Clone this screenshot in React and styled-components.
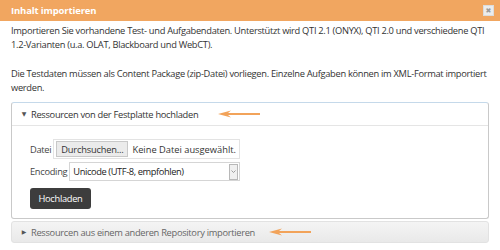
import React from "react";
import styled, { createGlobalStyle } from "styled-components";

const Global = createGlobalStyle`
  html, body { margin: 0; padding: 0; background: #fff; }
  body { font-family: "Open Sans", "DejaVu Sans", sans-serif; color: #333; }
`;

const Dialog = styled.div`
  width: 500px;
  height: 250px;
  background: #fff;
  overflow: hidden;
`;

const Header = styled.div`
  height: 21px;
  background: #f1a660;
  display: flex;
  align-items: center;
  justify-content: space-between;
  padding: 0 6px 0 11px;
  box-sizing: border-box;
`;

const Title = styled.div`
  color: #fff;
  font-weight: 700;
  font-size: 9.5px;
  letter-spacing: -0.15px;
`;

const Close = styled.div`
  width: 11px;
  height: 11px;
  background: #ececec;
  border: 1px solid #dcdcdc;
  box-sizing: border-box;
  display: flex;
  align-items: center;
  justify-content: center;
  color: #9a9a9a;
  font-size: 7px;
  line-height: 1;
  font-weight: 700;
`;

const Body = styled.div`
  padding: 3px 11px 0 11px;
  letter-spacing: -0.3px;
`;

const Para = styled.p`
  margin: 0 0 16px 0;
  font-size: 9.3px;
  line-height: 13.5px;
  &:last-of-type { margin-bottom: 8px; }
`;

const Panel = styled.div`
  border: 1px solid ${(p) => (p.$open ? "#c9c9c9" : "#e2e2e2")};
  border-top-color: ${(p) => (p.$open ? "#c5d9ea" : "#e2e2e2")};
  border-radius: 3px;
  margin-bottom: 2px;
  ${(p) => (p.$open ? "" : "background: linear-gradient(#f4f4f4, #e9e9e9);")}
`;

const PanelHead = styled.div`
  height: ${(p) => (p.$open ? "22px" : "20px")};
  display: flex;
  align-items: center;
  padding-left: 9px;
  font-size: 9.3px;
  color: ${(p) => (p.$open ? "#333" : "#666")};
  border-bottom: ${(p) => (p.$open ? "1px solid #e5e5e5" : "none")};
  gap: 4px;
`;

const Caret = styled.span`
  font-size: 6px;
  color: #555;
  width: 6px;
  display: inline-flex;
  justify-content: center;
`;

const Arrow = styled.svg`
  margin-left: ${(p) => p.$gap}px;
  width: 42px;
  height: 8px;
`;

const PanelBody = styled.div`
  padding: 13px 18px 9px 18px;
  display: flex;
  flex-direction: column;
  gap: 3px;
`;

const Row = styled.div`
  display: flex;
  align-items: center;
  gap: 2px;
  font-size: 9.3px;
`;

const Label = styled.span`
  color: #444;
`;

const FileBox = styled.div`
  width: 187px;
  height: 20px;
  border: 1px solid #e3e3e3;
  box-sizing: border-box;
  display: flex;
  align-items: center;
  padding-left: 2px;
  gap: 4px;
  font-size: 9.3px;
  letter-spacing: 0;
`;

const BrowseBtn = styled.span`
  background: #ebebeb;
  border: 1px solid #c8c8c8;
  height: 14px;
  padding: 0 4px;
  display: flex;
  align-items: center;
  color: #333;
  letter-spacing: -0.2px;
`;

const Select = styled.div`
  width: 171px;
  height: 19px;
  border: 1px solid #d5d5d5;
  box-sizing: border-box;
  display: flex;
  align-items: center;
  justify-content: space-between;
  padding-left: 3px;
  font-size: 9.3px;
  color: #222;
  letter-spacing: -0.4px;
`;

const SelectBtn = styled.span`
  width: 9px;
  height: 16px;
  margin-right: 1px;
  border: 1px solid #b8b8b8;
  background: #f0f0f0;
  box-sizing: border-box;
  display: flex;
  align-items: center;
  justify-content: center;
`;

const Button = styled.div`
  margin-top: 4px;
  width: 61px;
  height: 21px;
  background: #3d3d3d;
  border-radius: 3px;
  color: #fff;
  font-size: 9.3px;
  display: flex;
  align-items: center;
  justify-content: center;
`;

const OrangeArrow = ({ gap }) => (
  <Arrow $gap={gap} viewBox="0 0 42 8">
    <path d="M0 4 L13 0.5 L10 3.1 L42 3.1 L42 4.9 L10 4.9 L13 7.5 Z" fill="#f2a35a" />
  </Arrow>
);

export default function App() {
  return (
    <>
      <Global />
      <Dialog>
        <Header>
          <Title>Inhalt importieren</Title>
          <Close>✖</Close>
        </Header>
        <Body>
          <Para>
            Importieren Sie vorhandene Test- und Aufgabendaten. Unterstützt wird QTI 2.1 (ONYX), QTI 2.0 und verschiedene QTI
            1.2-Varianten (u.a. OLAT, Blackboard und WebCT).
          </Para>
          <Para>
            Die Testdaten müssen als Content Package (zip-Datei) vorliegen. Einzelne Aufgaben können im XML-Format importiert
            werden.
          </Para>
          <Panel $open>
            <PanelHead $open>
              <Caret>▼</Caret>
              Ressourcen von der Festplatte hochladen
              <OrangeArrow gap={16} />
            </PanelHead>
            <PanelBody>
              <Row>
                <Label>Datei</Label>
                <FileBox>
                  <BrowseBtn>Durchsuchen...</BrowseBtn>
                  Keine Datei ausgewählt.
                </FileBox>
              </Row>
              <Row>
                <Label>Encoding</Label>
                <Select>
                  Unicode (UTF-8, empfohlen)
                  <SelectBtn>
                    <svg width="5" height="3" viewBox="0 0 5 3">
                      <path d="M0.5 0.5 L2.5 2.5 L4.5 0.5" stroke="#888" strokeWidth="0.8" fill="none" />
                    </svg>
                  </SelectBtn>
                </Select>
              </Row>
              <Button>Hochladen</Button>
            </PanelBody>
          </Panel>
          <Panel>
            <PanelHead>
              <Caret>▶</Caret>
              Ressourcen aus einem anderen Repository importieren
              <OrangeArrow gap={10} />
            </PanelHead>
          </Panel>
        </Body>
      </Dialog>
    </>
  );
}
